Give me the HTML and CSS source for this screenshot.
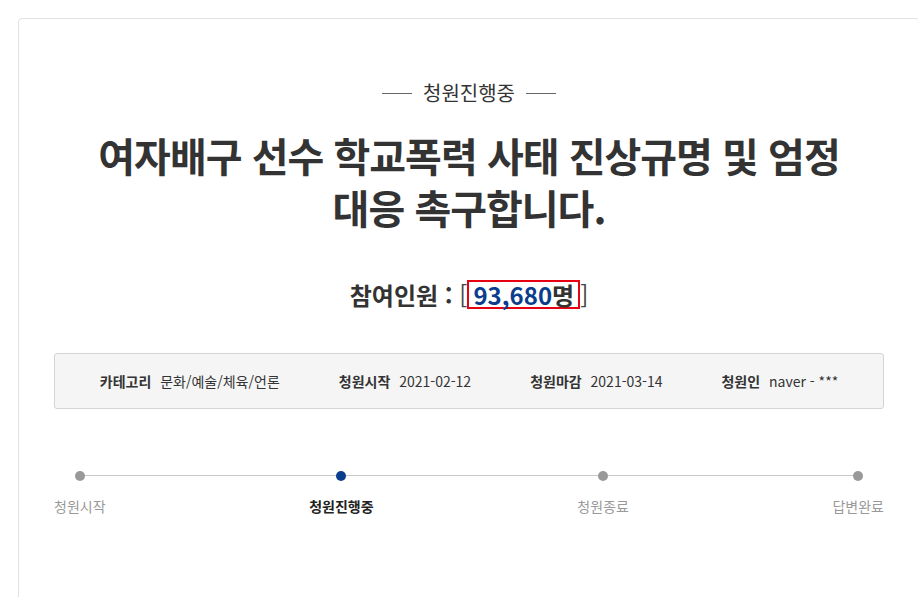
FILE: index.html
```html
<!DOCTYPE html>
<html lang="ko">
<head>
    <meta charset="UTF-8">
    <meta name="viewport" content="width=device-width, initial-scale=1.0">
    <title>청원 상세</title>
    <link rel="stylesheet" href="styles.css">
</head>
<body>
<div class="petition">
    <!-- Status and title -->
    <div class="status"><span>청원진행중</span></div>
    <h1 class="title">여자배구 선수 학교폭력 사태 진상규명 및 엄정<br>대응 촉구합니다.</h1>

    <div class="count">
        참여인원 : <span class="bracket">[</span><span class="count-num">93,680<em>명</em></span><span class="bracket">]</span>
    </div>

    <!-- Petition info -->
    <ul class="info">
        <li><b>카테고리</b> 문화/예술/체육/언론</li>
        <li><b>청원시작</b> 2021-02-12</li>
        <li><b>청원마감</b> 2021-03-14</li>
        <li><b>청원인</b> naver - ***</li>
    </ul>

    <!-- Progress steps -->
    <ol class="steps">
        <li><i></i>청원시작</li>
        <li class="on"><i></i>청원진행중</li>
        <li><i></i>청원종료</li>
        <li><i></i>답변완료</li>
    </ol>
</div>
</body>
</html>
```

FILE: styles.css
```css
body {
    margin: 0;
    padding: 0;
    background: #fff;
    font-family: "Noto Sans CJK KR", "Noto Sans", sans-serif;
    color: #333;
}

.petition {
    width: 830px;
    margin: 18px 0 0 18px;
    padding: 62px 35px 120px;
    border: 1px solid #e2e2e2;
    border-radius: 4px;
}

.status {
    display: flex;
    justify-content: center;
    align-items: center;
    gap: 11px;
    font-size: 20px;
    line-height: 24px;
    color: #333;
}

.status::before,
.status::after {
    content: "";
    width: 30px;
    height: 1px;
    background: #666;
}

.title {
    margin: 24px 0 0;
    text-align: center;
    font-size: 40px;
    line-height: 52px;
    font-weight: bold;
    letter-spacing: -1px;
    color: #333;
}

.count {
    margin-top: 47px;
    text-align: center;
    font-size: 24px;
    line-height: 30px;
    font-weight: bold;
    color: #333;
}

.count .bracket {
    font-weight: normal;
    color: #444;
}

.count-num {
    display: inline-block;
    padding: 0 4px;
    border: 2px solid #e60012;
    line-height: 25px;
    color: #0b3d8e;
}

.count-num em {
    font-style: normal;
    color: #333;
}

.info {
    display: flex;
    justify-content: center;
    gap: 59px;
    margin: 43px 0 0;
    padding: 0;
    list-style: none;
    height: 54px;
    align-items: center;
    background: #f5f5f5;
    border: 1px solid #d4d4d4;
    border-radius: 3px;
    font-size: 14px;
    color: #333;
}

.info b {
    margin-right: 5px;
}

.steps {
    position: relative;
    display: flex;
    justify-content: space-between;
    margin: 62px 0 0;
    padding: 0;
    list-style: none;
    font-size: 14px;
    line-height: 20px;
    color: #999;
}

.steps::before {
    content: "";
    position: absolute;
    top: 4px;
    left: 27px;
    right: 27px;
    height: 1px;
    background: #c8c8c8;
}

.steps li {
    display: flex;
    flex-direction: column;
    align-items: center;
}

.steps i {
    position: relative;
    width: 10px;
    height: 10px;
    margin-bottom: 15px;
    border-radius: 50%;
    background: #999;
}

.steps li.on {
    font-weight: bold;
    color: #222;
}

.steps li.on i {
    background: #0b3d8e;
}
```
